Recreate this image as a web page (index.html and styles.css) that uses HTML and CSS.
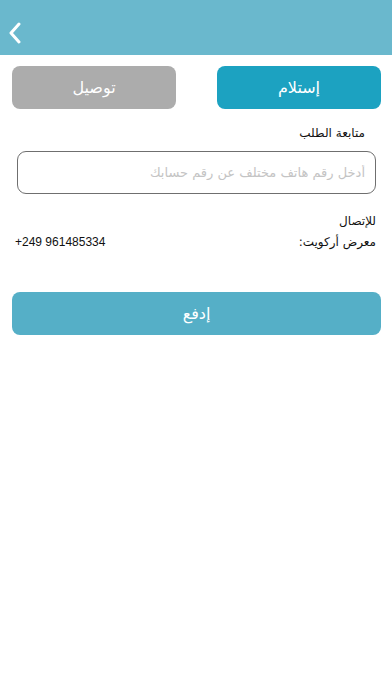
FILE: index.html
```html
<!DOCTYPE html>
<html lang="ar">

<head>
    <meta charset="UTF-8">
    <meta name="viewport" content="width=device-width, initial-scale=1.0">
    <title>الدفع</title>
    <link rel="stylesheet" href="styles.css">
</head>

<body>

    <div class="header">
        <a class="back" href="#">
            <svg width="14" height="22" viewBox="0 0 14 22">
                <path d="M11 2 L3 11 L11 20" fill="none" stroke="#fff" stroke-width="3" stroke-linecap="round" stroke-linejoin="round" />
            </svg>
        </a>
    </div>

    <div class="main">
        <div class="tabs">
            <button class="tab active">إستلام</button>
            <button class="tab">توصيل</button>
        </div>

        <label class="label" for="phone">متابعة الطلب</label>
        <input class="field" id="phone" type="text" placeholder="أدخل رقم هاتف مختلف عن رقم حسابك">

        <div class="contact">
            <div class="title">للإتصال</div>
            <div class="row">
                <span>معرض أركويت:</span>
                <span class="phone" dir="ltr">+249 961485334</span>
            </div>
        </div>

        <button class="btn">إدفع</button>
    </div>

</body>

</html>
```

FILE: styles.css
```css
* {
    margin: 0;
    padding: 0;
    box-sizing: border-box;
}

body {
    background-color: #fff;
    font-family: "DejaVu Sans", sans-serif;
    direction: rtl;
    width: 392px;
    height: 696px;
}

.header {
    height: 55px;
    background-color: #6ab8cd;
    display: flex;
    align-items: flex-end;
    padding: 0 0 11px 0;
    direction: ltr;
}

.back {
    display: block;
    margin-left: 8px;
    height: 22px;
}

.main {
    padding: 11px 11px 0 12px;
    display: flex;
    flex-direction: column;
}

.tabs {
    display: flex;
    gap: 41px;
}

.tab {
    flex: 1;
    height: 43px;
    border: none;
    border-radius: 8px;
    background-color: #acacac;
    color: #fff;
    font-family: "DejaVu Sans", sans-serif;
    font-size: 16px;
}

.tab.active {
    background-color: #1ca2c1;
}

.label {
    font-size: 12px;
    color: #111;
    margin: 16px 16px 0 0;
    line-height: 16px;
}

.field {
    margin: 10px 5px 0 5px;
    height: 43px;
    border: 1px solid #6f6f6f;
    border-radius: 9px;
    padding: 0 10px;
    font-family: "DejaVu Sans", sans-serif;
    font-size: 13px;
    direction: rtl;
    outline: none;
}

.field::placeholder {
    color: #c4c4c4;
}

.contact {
    margin: 17px 5px 0 3px;
    font-size: 12px;
    color: #111;
    line-height: 21px;
}

.row {
    display: flex;
    justify-content: space-between;
}

.phone {
    font-family: "Liberation Sans", sans-serif;
    font-size: 12px;
}

.btn {
    margin-top: 39px;
    height: 43px;
    border: none;
    border-radius: 8px;
    background-color: #55afc7;
    color: #fff;
    font-family: "DejaVu Sans", sans-serif;
    font-size: 16px;
}
```
